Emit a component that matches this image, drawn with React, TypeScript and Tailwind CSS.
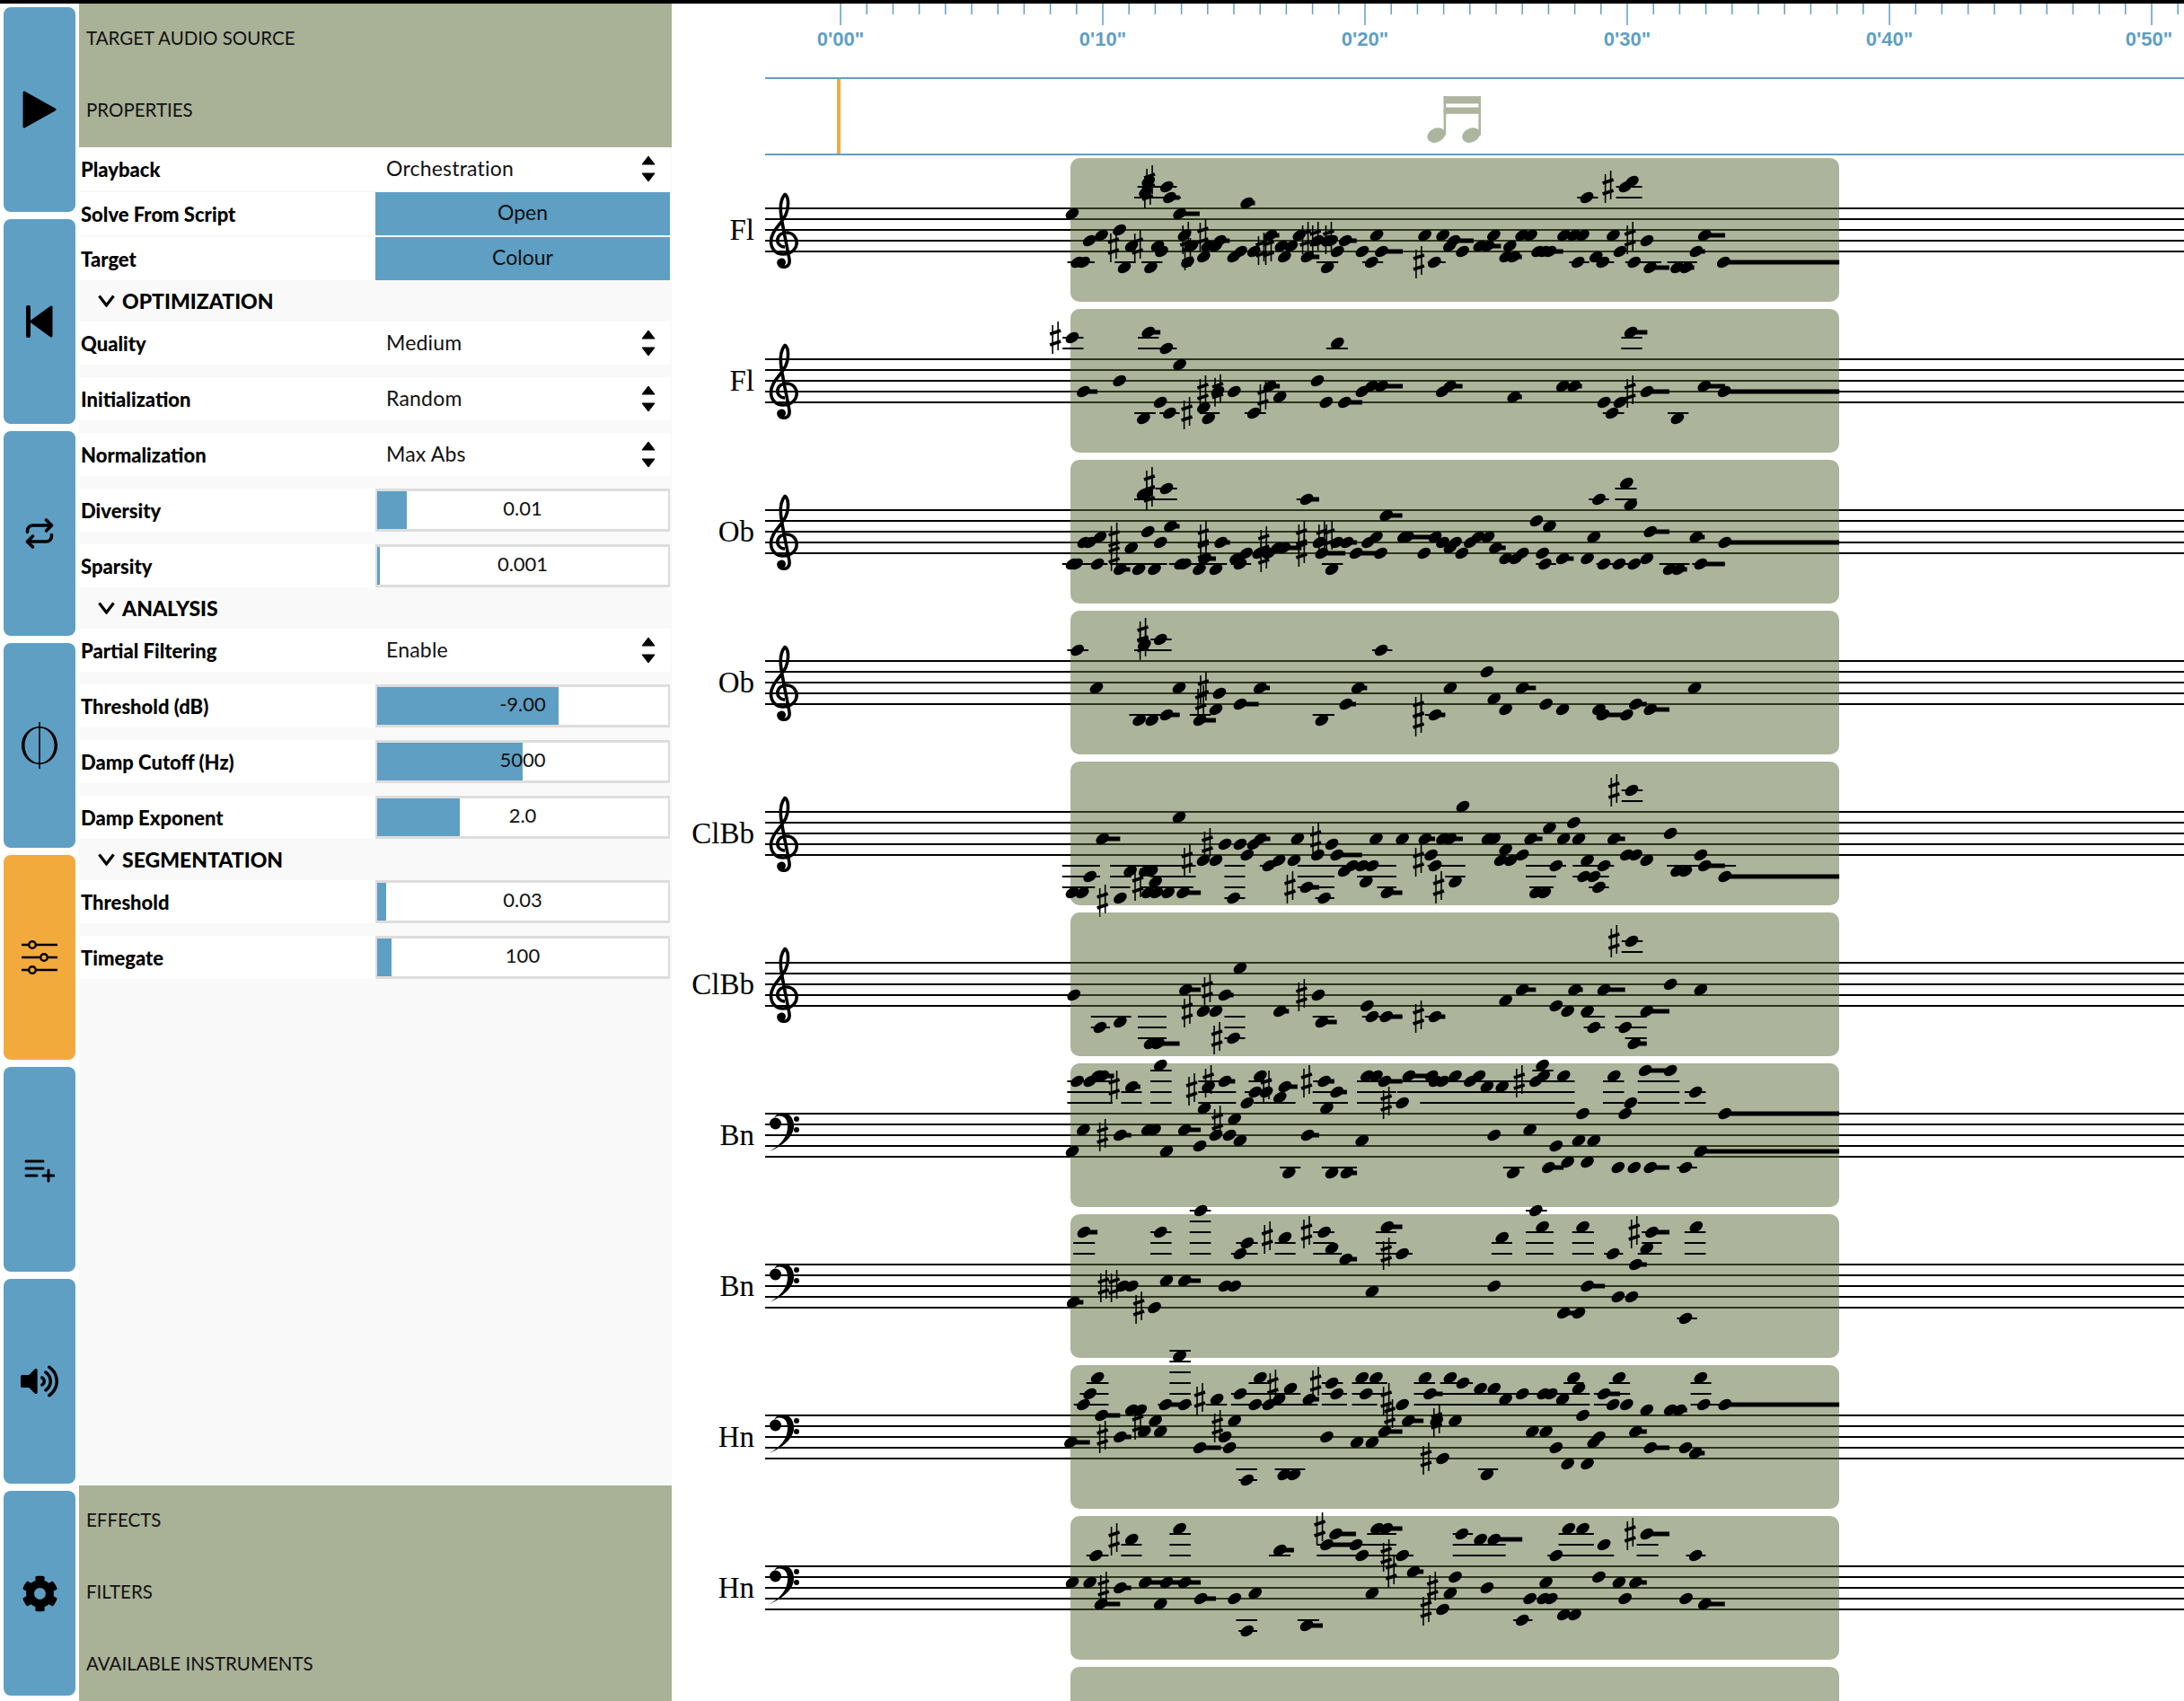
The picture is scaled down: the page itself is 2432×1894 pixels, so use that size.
import { Repeat } from "lucide-react";
import { FaCog, FaVolumeUp } from "react-icons/fa";

type Note = [number, number, number?];
type Sharp = [number, number];
type Ledger = [number, number, number];
type Part = { o: number; k: number; n: Note[]; s: Sharp[]; l: Ledger[] };
type StaffData = { name: string; clef: "treble" | "bass"; parts: Part[] };

const font = "[font-family:Lato,'Liberation_Sans',sans-serif]";
const LEFT = 748;
const TOP = 60;

const oboe1: Part = {
  o: 1180,
  k: 1.782,
  n: [
    [25, 10], [33, 10], [75, 10], [48, 6], [60, 6], [80, 5], [120, 11, 140], [142, 7], [157, 11], [188, 11], [175, 4], [200, 6], [220, 3, 238],
    [172, -3], [166, -3], [212, -4], [240, 10, 260], [248, 10], [288, 9, 310], [277, 11], [310, 11], [320, 6, 338], [350, 9], [358, 10], [370, 8],
    [395, 8], [415, 8], [432, 7], [445, 7, 480], [490, -2, 515], [515, 6], [520, 8, 567], [550, 6], [570, 6, 590], [540, 11], [588, 8, 640], [637, 8],
    [612, 6], [628, 5], [648, 1, 680], [683, 5, 745], [690, 5], [745, 5], [723, 8], [760, 6], [785, 6], [775, 7], [798, 8], [815, 6], [830, 5], [850, 5],
    [865, 7, 885], [885, 9], [905, 9], [918, 8], [946, 2], [972, 3], [958, 8], [963, 10], [998, 9, 1020], [1047, 9], [1060, 5], [1070, -2], [1125, -5],
    [1133, -1], [1172, 4, 1210], [1263, 5, 1280], [1080, 10], [1110, 10], [1140, 10], [1165, 9], [1210, 11], [1228, 11, 1245], [1272, 10, 1320], [1320, 6, 1547],
  ],
  s: [[108, 5.3], [108, 8.3], [178, -5], [178, -3], [285, 5], [285, 7.5], [405, 6], [405, 8.5], [480, 5], [480, 7.5], [520, 5], [535, 5]],
  l: [[5, 95, 10], [100, 213, 10], [148, 233, -2], [190, 233, -4], [217, 332, 10], [340, 380, 10], [470, 515, -2], [520, 562, 10], [945, 985, 10], [1050, 1090, -2], [1102, 1145, -4], [1102, 1145, -2], [1065, 1150, 10], [1190, 1250, 10], [1255, 1320, 10]],
};

const oboe2: Part = {
  o: 1180,
  k: 1.782,
  n: [
    [35, -2], [168, -3], [200, -4], [73, 5], [237, 5], [158, 11], [183, 11], [212, 10, 238], [317, 6], [310, 9], [278, 11, 310], [358, 8, 395], [398, 5, 417],
    [520, 11], [568, 8, 588], [592, 5, 610], [638, -2], [745, 10, 765], [775, 5], [848, 2], [862, 7], [885, 9], [918, 5, 945], [965, 8], [998, 9], [1070, 9],
    [1078, 10, 1120], [1125, 10], [1143, 8, 1165], [1172, 9, 1210], [1260, 5],
  ],
  s: [[165, -5], [165, -3.2], [285, 5], [280, 7.5], [712, 9], [712, 11]],
  l: [[15, 57, -2], [180, 222, -4], [148, 222, -2], [138, 238, 10], [258, 300, 10], [502, 545, 10], [620, 660, -2], [725, 765, 10]],
};

const clar1: Part = {
  o: 1180,
  k: 1.782,
  n: [
    [25, 15], [45, 15], [60, 12], [120, 16], [85, 5, 120], [140, 11], [170, 11], [182, 11], [190, 13], [175, 15], [192, 15], [215, 15], [245, 15, 280], [237, 1],
    [285, 9], [310, 9], [328, 6], [358, 6], [385, 6], [398, 5, 418], [372, 8], [345, 16], [415, 10], [435, 9], [465, 9], [472, 5], [540, 6], [512, 8], [550, 8, 600],
    [490, 14, 515], [525, 16], [565, 11], [580, 10], [600, 10], [620, 10], [608, 13], [650, 15, 680], [628, 5], [680, 5], [725, 5, 745], [760, 5], [775, 5, 800], [800, -1],
    [737, 8], [745, 10], [785, 13], [850, 5], [862, 5], [885, 7], [875, 9], [895, 9], [918, 8], [935, 5, 958], [972, 3], [1020, 2], [1000, 5], [1030, 5], [985, 10],
    [945, 15], [962, 15], [1047, 9], [1080, 10], [1040, 12], [1060, 12], [1070, 14], [1100, 5, 1122], [1135, -4], [1125, 8], [1143, 8], [1165, 9], [1212, 4], [1272, 8],
    [1225, 11], [1242, 11], [1280, 10, 1320], [1320, 12, 1547],
  ],
  s: [[85, 16.5], [155, 13.5], [253, 9], [293, 6], [508, 5], [457, 14], [712, 9], [752, 14], [1100, -4]],
  l: [
    [5, 80, 10], [5, 80, 12], [5, 70, 14], [100, 270, 10], [100, 142, 12], [100, 140, 14], [180, 270, 12], [160, 265, 14], [327, 368, 10], [327, 368, 12], [327, 368, 14], [327, 368, 16],
    [397, 430, 10], [472, 668, 10], [472, 545, 12], [472, 545, 14], [507, 545, 16], [590, 668, 12], [630, 668, 14], [730, 805, 10], [765, 805, 12], [925, 1005, 10], [925, 985, 12], [932, 980, 14],
    [1018, 1100, 10], [1018, 1090, 12], [1050, 1090, 14], [1115, 1157, -4], [1115, 1157, -2], [1205, 1342, 10],
  ],
};

const clar2: Part = {
  o: 1180,
  k: 1.782,
  n: [
    [28, 6], [80, 12], [120, 11], [180, 15], [195, 15, 238], [250, 5, 280], [328, 6, 345], [285, 9], [310, 9], [358, 1], [345, 14], [437, 9, 455], [513, 6], [520, 11, 550],
    [610, 8], [620, 10], [648, 10, 680], [745, 10, 765], [885, 7], [918, 5, 945], [985, 8], [1008, 9], [1047, 9], [1060, 12], [1022, 5, 1038], [1080, 5, 1122], [1122, 12],
    [1140, 15, 1165], [1165, 9, 1210], [1135, -4], [1212, 4], [1272, 5],
  ],
  s: [[293, 5], [253, 9], [312, 14], [480, 6], [712, 10], [1100, -4]],
  l: [[62, 142, 10], [62, 100, 12], [155, 212, 10], [155, 212, 12], [155, 212, 14], [327, 368, 10], [327, 368, 12], [327, 368, 14], [502, 545, 10], [600, 680, 10], [725, 765, 10], [1038, 1082, 10], [1040, 1082, 12], [1102, 1165, 10], [1102, 1165, 12], [1122, 1165, 14], [1115, 1157, -4], [1115, 1157, -2]],
};

const bassoon1: Part = {
  o: 1180,
  k: 1.782,
  n: [
    [25, 7], [47, 3], [120, 4, 142], [175, 3], [188, 3], [212, 7], [248, 3, 280], [278, 6], [35, -6], [60, -6], [75, -7], [85, -7, 108], [143, -5, 160], [200, -9], [295, -5], [328, -6, 348],
    [287, -1], [347, 1], [310, 4], [337, 4], [358, 5], [372, -2], [398, -7], [388, -4], [410, -4], [437, -3], [447, -5, 472], [525, -6, 545], [550, -4, 570], [530, -1], [492, 4, 515],
    [455, 11], [540, 11], [570, 11, 590], [600, 5], [610, -7], [628, -7], [645, -6, 680], [680, -2], [693, -7, 738], [738, -7], [745, -6], [760, -6], [785, -7], [815, -6], [832, -7],
    [848, -5], [878, -5], [945, -6], [958, -9], [960, -7], [1000, -7], [862, 4], [933, 3], [985, 6], [1030, 5], [1060, 5], [1008, 9], [1047, 9], [970, 10, 1000], [900, 11], [1038, 0],
    [1122, 0], [1133, -2], [1100, -7], [1162, -8, 1212], [1212, -8], [1262, -4], [1108, 10], [1140, 10], [1172, 10, 1210], [1242, 10], [1320, 0, 1547], [1272, 7, 1547],
  ],
  s: [[85, 4], [108, -5], [262, -4.5], [295, -6], [313, 1.5], [410, -5], [490, -6], [648, -2], [912, -6]],
  l: [
    [15, 100, -6], [15, 100, -4], [15, 105, -2], [122, 163, -4], [122, 163, -2], [180, 222, -8], [180, 222, -6], [180, 222, -4], [180, 222, -2], [275, 348, -6], [275, 350, -4], [275, 350, -2],
    [375, 420, -6], [367, 420, -4], [385, 468, -2], [503, 545, -6], [502, 570, -4], [502, 572, -2], [437, 478, 10], [520, 590, 10], [590, 680, -6], [590, 668, -4], [590, 668, -2], [680, 1022, -6],
    [670, 1022, -4], [715, 1022, -2], [938, 980, -8], [880, 922, 10], [1078, 1120, -6], [1078, 1120, -4], [1078, 1120, -2], [1147, 1230, -6], [1147, 1230, -4], [1147, 1230, -2], [1240, 1282, -4], [1240, 1282, -2], [1225, 1265, 10],
  ],
};

const bassoon2: Part = {
  o: 1180,
  k: 1.782,
  n: [
    [48, -6, 75], [200, -6], [280, -10], [372, -4], [358, -2], [447, -5], [525, -6], [540, -3], [568, -1, 590], [650, -7, 680], [680, -2], [27, 7, 47], [143, 4], [125, 4], [188, 8],
    [212, 3], [248, 3, 280], [328, 4], [347, 4], [238, 17], [620, 5], [862, 4], [878, -5], [945, -10], [958, -7], [1038, -7], [1098, -2], [1175, -6, 1210], [1165, -3], [1143, 0, 1165],
    [1263, -7], [1047, 4, 1082], [1000, 9, 1030], [1030, 9], [1108, 6], [1135, 6], [1242, 10],
  ],
  s: [[87, 4], [108, 4], [157, 8], [412, -5], [490, -6], [648, -2], [1140, -6]],
  l: [
    [27, 70, -4], [27, 70, -2], [180, 222, -6], [180, 222, -4], [180, 222, -2], [258, 300, -10], [258, 300, -8], [258, 300, -6], [258, 300, -4], [258, 300, -2], [350, 393, -4], [340, 393, -2],
    [427, 468, -4], [427, 468, -2], [503, 545, -6], [503, 545, -4], [503, 560, -2], [627, 668, -6], [627, 668, -4], [627, 700, -2], [218, 260, 16], [857, 898, -4], [857, 898, -2], [925, 967, -10],
    [925, 980, -6], [925, 980, -4], [925, 980, -2], [1017, 1060, -6], [1017, 1060, -4], [1017, 1060, -2], [1080, 1118, -2], [1155, 1195, -6], [1155, 1195, -4], [1147, 1195, -2], [1240, 1282, -6], [1240, 1282, -4], [1240, 1282, -2], [1225, 1265, 10],
  ],
};

const horn1: Part = {
  o: 1180,
  k: 1.782,
  n: [
    [75, -7], [60, -4], [47, -2], [83, 0, 120], [22, 5, 60], [120, 4, 142], [143, -1], [160, -1], [190, 1], [168, 3], [200, 3], [238, -11], [210, -2, 248], [248, -2], [312, -3], [347, 1], [328, 4],
    [278, 6, 320], [337, 6], [358, -4], [388, -2], [398, -7], [415, -2], [435, -3], [458, -5], [495, -3, 515], [540, -6], [550, -4], [372, 12], [445, 11], [465, 11], [530, 4], [590, 5], [620, 5],
    [600, -7], [628, -7], [608, -4], [645, 3, 680], [680, -2], [692, 1, 722], [725, -7], [735, -4, 760], [775, -7], [800, -6], [835, -5], [862, -5], [748, 1], [785, 1], [760, 8], [848, 11],
    [885, -3], [918, -4], [960, -4], [975, -4], [938, 3], [965, 3], [985, 6], [1008, 9], [1047, 9], [1060, 5], [1070, 4], [998, -3], [1030, -5], [1020, -7], [1038, 0], [1080, -4, 1112], [1110, -7],
    [1098, -2], [1125, -2], [1165, -1], [1212, -1], [1230, -1, 1245], [1143, 3, 1165], [1172, 6, 1210], [1242, 6], [1262, 7, 1280], [1272, -7], [1278, -2], [1320, -2, 1547],
  ],
  s: [[85, 4], [155, 1.5], [278, -3], [313, 2], [423, -5.5], [508, -6], [648, -3], [655, 0], [748, 1], [727, 8]],
  l: [
    [53, 97, -6], [40, 97, -4], [28, 97, -2], [218, 260, -10], [218, 260, -8], [218, 260, -6], [218, 260, -4], [195, 262, -2], [290, 332, -2], [340, 478, -4], [340, 512, -2], [375, 420, -6], [520, 562, -6],
    [520, 570, -4], [520, 570, -2], [350, 392, 10], [355, 392, 12], [427, 487, 10], [580, 650, -6], [580, 650, -4], [580, 630, -2], [703, 745, -6], [703, 880, -4], [703, 1052, -2], [755, 820, -6],
    [830, 870, 10], [880, 1052, -4], [1000, 1040, -6], [1090, 1132, -6], [1060, 1132, -4], [1060, 1090, -2], [1252, 1293, -6], [1252, 1293, -4], [1252, 1320, -2],
  ],
};

const horn2: Part = {
  o: 1180,
  k: 1.782,
  n: [
    [25, 3], [60, 3], [120, 4, 142], [82, 7, 120], [72, -2], [143, -5], [238, -7], [170, 3, 248], [212, 3], [248, 3, 280], [200, 7], [280, 6, 310], [347, 6], [388, 5], [372, 12], [437, -3, 465],
    [490, 11, 522], [548, -6, 588], [530, -4, 588], [588, -4], [600, -2], [630, -7], [648, -7, 680], [680, -2], [702, 1, 722], [620, 5], [760, 8], [775, 5], [785, 2], [848, 4], [918, 10], [798, -6],
    [835, -5], [862, -5, 918], [965, 3], [933, 6], [960, 6], [975, 6], [1000, 9], [1022, 9], [1010, -7], [1038, -7], [985, -2], [1080, -4], [1070, 2], [1110, 3], [1143, 3, 1165], [1122, 6],
    [1165, -6, 1210], [1262, -2], [1243, 6], [1280, 7, 1320],
  ],
  s: [[87, 4], [108, -5], [516, -7], [648, -2], [658, 1], [740, 4], [727, 8], [1132, -6]],
  l: [
    [53, 97, -2], [122, 163, -4], [122, 163, -2], [218, 260, -6], [218, 260, -4], [218, 260, -2], [350, 392, 10], [355, 392, 12], [415, 458, -2], [472, 515, 10], [510, 668, -4], [510, 702, -2], [610, 668, -6],
    [780, 820, -6], [780, 885, -4], [780, 885, -2], [900, 938, 10], [990, 1060, -6], [990, 1060, -4], [968, 1100, -2], [1145, 1188, -4], [1145, 1188, -2], [1243, 1282, -2],
  ],
};

const staves: StaffData[] = [
  {
    name: "Fl",
    clef: "treble",
    parts: [
      {
        o: 760,
        k: 2.24,
        n: [
          [972, 1], [985, 10], [1000, 10], [1015, 6], [1045, 5], [1090, 4], [1102, 11], [1120, 7], [1185, 7], [1195, 8], [1168, 11], [1162, -5], [1155, -3], [1208, -4], [1215, -2, 1240], [1240, 1, 1290],
          [1252, 5], [1260, 10], [1270, 7], [1300, 9], [1310, 7], [1340, 6, 1365], [1330, 7], [1408, -1, 1428], [1375, 9], [1392, 8], [1425, 8],
        ],
        s: [[1075, 7], [1135, 7], [1165, -5], [1160, -3], [1255, 5.5], [1298, 5], [1260, 8.5]],
        l: [[960, 1028, 10], [1078, 1130, 10], [1145, 1197, 10], [1135, 1233, -4], [1127, 1243, -2]],
      },
      {
        o: 1400,
        k: 2.24,
        n: [
          [33, 5, 55], [68, 9], [60, 7], [85, 7], [105, 5], [125, 9, 155], [150, 6], [175, 6], [185, 6], [220, 6, 248], [200, 8], [175, 11], [298, 5], [262, 8], [310, 8, 363], [285, 10], [442, 10], [418, 5],
          [463, 5], [490, 6, 540], [480, 7], [512, 8], [555, 7], [575, 7, 608], [590, 5], [630, 7], [620, 9], [640, 9, 660], [660, 5], [682, 5], [700, 8], [715, 8], [730, 8, 763], [765, 5], [790, 5], [812, 5],
          [800, 10], [845, 9], [862, 10], [888, 5], [905, 8], [972, 6], [940, 10], [980, 11, 1028], [1047, 11], [1070, 11, 1090], [1116, 5, 1167], [1095, 8, 1117], [822, -2], [918, -4], [935, -5], [1163, 10, 1452],
        ],
        s: [[10, 7.5], [28, 7.5], [120, 5.5], [145, 5.5], [178, 5.5], [403, 10], [930, 5.5], [875, -4]],
        l: [[148, 202, 10], [262, 314, 10], [425, 470, 10], [778, 828, 10], [850, 890, 10], [918, 1008, 10], [1023, 1097, 10], [798, 850, -2], [895, 960, -4], [895, 960, -2]],
      },
    ],
  },
  {
    name: "Fl",
    clef: "treble",
    parts: [
      {
        o: 760,
        k: 2.24,
        n: [[972, -4], [1000, 6, 1035], [1090, 4], [1162, -5, 1192], [1207, -2], [1240, 1], [1150, 11], [1192, 8], [1215, 10], [1300, 9], [1312, 11], [1376, 6], [1335, 6], [1425, 10], [1465, 5, 1490], [1490, 7]],
        s: [[930, -4], [1258, 10], [1298, 6], [1335, 5.8], [1448, 7]],
        l: [[948, 1000, -4], [948, 1000, -2], [1136, 1188, -4], [1136, 1233, -2], [1127, 1180, 10], [1190, 1240, 10], [1290, 1340, 10], [1402, 1455, 10]],
      },
      {
        o: 1400,
        k: 2.24,
        n: [[200, -3], [150, 4], [172, 8], [218, 8, 262], [262, 6], [285, 5], [310, 5, 363], [462, 6], [480, 5, 512], [640, 7, 660], [762, 5], [790, 5, 810], [865, 8], [905, 8], [885, 10], [972, 6, 1028], [1048, 11], [932, -5, 973], [1115, 5, 1167], [1165, 6, 1452]],
        s: [[930, 6]],
        l: [[172, 226, -2], [862, 915, 10], [1024, 1076, 10], [908, 960, -4], [908, 960, -2]],
      },
    ],
  },
  { name: "Ob", clef: "treble", parts: [oboe1] },
  { name: "Ob", clef: "treble", parts: [oboe2] },
  { name: "ClBb", clef: "treble", parts: [clar1] },
  { name: "ClBb", clef: "treble", parts: [clar2] },
  { name: "Bn", clef: "bass", parts: [bassoon1] },
  { name: "Bn", clef: "bass", parts: [bassoon2] },
  { name: "Hn", clef: "bass", parts: [horn1] },
  { name: "Hn", clef: "bass", parts: [horn2] },
];

function TrebleClef() {
  return (
    <g transform={`translate(${857 - LEFT} 43)`}>
      <path
        d="M17 60C11 60 8 55 9 51C10 46 15 44 19 44C26 44 31 50 30 57C29 64 22 68 15 68C7 68 1.5 62 1.5 54C1.5 42 13 35 18 24C20.500 18 21 11 20 6C19 3 18 1.500 17 1.500C14 5 11.500 12 12.500 22C14 36 20 62 22 74C23 81 18 83 14 82C10 81 9 77 11 75"
        fill="none"
        stroke="black"
        strokeWidth="3.600"
      />
      <circle cx="13.500" cy="77" r="4.500" fill="black" />
    </g>
  );
}

function BassClef() {
  return (
    <g transform={`translate(${857 - LEFT} 60)`}>
      <path d="M0 42C12 35 20 26 20 14C20 6 16 2.500 11 2.500C8 2.500 5.500 4 5 6C6 1 11 -1 15 -1C23 -1 27 6 27 14C27 26 14 36 0 42Z" fill="black" />
      <circle cx="6.500" cy="11" r="6.500" fill="black" />
      <circle cx="30" cy="6" r="3" fill="black" />
      <circle cx="30" cy="18" r="3" fill="black" />
    </g>
  );
}

function SharpSign({ x, y }: { x: number; y: number }) {
  return (
    <g stroke="black">
      <line x1={x - 3} y1={y - 14} x2={x - 3} y2={y + 18} strokeWidth="1.6" />
      <line x1={x + 3} y1={y - 18} x2={x + 3} y2={y + 14} strokeWidth="1.6" />
      <line x1={x - 6} y1={y - 4} x2={x + 6} y2={y - 8} strokeWidth="3.5" />
      <line x1={x - 6} y1={y + 8} x2={x + 6} y2={y + 4} strokeWidth="3.5" />
    </g>
  );
}

function Notes({ part }: { part: Part }) {
  const px = (z: number) => part.o + z / part.k - LEFT;
  const py = (step: number) => TOP + step * 6;
  return (
    <>
      {part.l.map(([a, b, step], i) => (
        <line key={`l${i}`} x1={px(a)} x2={px(b)} y1={py(step)} y2={py(step)} stroke="black" strokeWidth="2" />
      ))}
      {part.n.map(([z, step, end], i) =>
        end ? <rect key={`t${i}`} x={px(z)} y={py(step) - 2.5} width={px(end) - px(z)} height="5" fill="black" /> : null,
      )}
      {part.n.map(([z, step], i) => (
        <ellipse key={`n${i}`} cx={px(z)} cy={py(step)} rx="8" ry="5.400" fill="black" transform={`rotate(-32 ${px(z)} ${py(step)})`} />
      ))}
      {part.s.map(([z, step], i) => (
        <SharpSign key={`s${i}`} x={px(z)} y={py(step)} />
      ))}
    </>
  );
}

function Staff({ data }: { data: StaffData }) {
  return (
    <div className="relative flex h-[168px] items-center">
      <div className="w-[92px] pt-px text-right text-[33px] leading-none text-black [font-family:'Liberation_Serif',serif]">{data.name}</div>
      <svg className="absolute left-0 top-0 h-[168px] w-[1684px] overflow-visible">
        {[0, 1, 2, 3, 4].map((i) => (
          <line key={i} x1={104} x2={1684} y1={TOP + i * 12} y2={TOP + i * 12} stroke="black" strokeWidth="2" />
        ))}
        {data.clef === "treble" ? <TrebleClef /> : <BassClef />}
      </svg>
      <div className="absolute left-[444px] top-1 h-[160px] w-[856px] rounded-[10px] bg-[#596937]/50" />
      <svg className="absolute left-0 top-0 h-[168px] w-[1684px] overflow-visible">
        {data.parts.map((part, i) => (
          <Notes key={i} part={part} />
        ))}
      </svg>
    </div>
  );
}

function Ruler() {
  const ticks = Array.from({ length: 52 }, (_, i) => i);
  const labels = ["0'00\"", "0'10\"", "0'20\"", "0'30\"", "0'40\"", "0'50\""];
  return (
    <div className="relative h-[82px]">
      <svg className="h-[28px] w-[1684px]">
        {ticks.map((i) => (
          <line key={i} x1={188 + i * 29.2} x2={188 + i * 29.2} y1={0} y2={i % 10 === 0 ? 24 : 12} stroke="#5f9fc4" strokeWidth="1.5" />
        ))}
      </svg>
      {labels.map((text, i) => (
        <span
          key={text}
          style={{ left: i === 5 ? 1645 : 188 + i * 292 }}
          className="absolute top-7 -translate-x-1/2 text-[22px] font-bold leading-6 text-[#5f9fc4] [font-family:'Liberation_Sans',sans-serif]"
        >
          {text}
        </span>
      ))}
    </div>
  );
}

function MarkerTrack() {
  return (
    <div className="relative ml-[104px] flex h-[87px] items-center justify-center border-y-2 border-[#5f9fc4] pr-[46px] pt-[6px]">
      <div className="absolute bottom-0 left-20 top-0 w-1 bg-[#f3aa3c]" />
      <svg className="h-[52px] w-[60px]" viewBox="0 0 58 50">
        <rect x="18" y="0" width="40" height="8" fill="#aeb59f" />
        <rect x="18" y="12" width="40" height="7" fill="#aeb59f" />
        <rect x="18" y="0" width="2.500" height="42" fill="#aeb59f" />
        <rect x="55.500" y="0" width="2.500" height="42" fill="#aeb59f" />
        <ellipse cx="10" cy="42" rx="10" ry="7.500" transform="rotate(-25 10 42)" fill="#aeb59f" />
        <ellipse cx="47.500" cy="42" rx="10" ry="7.500" transform="rotate(-25 47.500 42)" fill="#aeb59f" />
      </svg>
    </div>
  );
}

function NavButton({ active, children }: { active?: boolean; children: React.ReactNode }) {
  return (
    <button className={`flex h-[228px] w-20 shrink-0 items-center justify-center rounded-lg ${active ? "bg-[#f3aa3c]" : "bg-[#5f9fc4]"}`}>
      {children}
    </button>
  );
}

function Sidebar() {
  return (
    <div className="flex w-[88px] shrink-0 flex-col gap-2 pl-1 pt-1">
      <NavButton>
        <svg width="38" height="42" viewBox="0 0 38 42">
          <path d="M2 2L36 21L2 40Z" fill="black" stroke="black" strokeWidth="3" strokeLinejoin="round" />
        </svg>
      </NavButton>
      <NavButton>
        <svg width="30" height="36" viewBox="0 0 30 36">
          <rect x="0" y="0" width="5" height="36" rx="2" fill="black" />
          <path d="M28 2V34L6 18Z" fill="black" stroke="black" strokeWidth="3" strokeLinejoin="round" />
        </svg>
      </NavButton>
      <NavButton>
        <Repeat size={36} strokeWidth={2.4} color="black" />
      </NavButton>
      <NavButton>
        <svg width="40" height="52" viewBox="0 0 40 52">
          <path fillRule="evenodd" d="M20 5C31 5 40 14 40 26C40 38 31 47 20 47C9 47 0 38 0 26C0 14 9 5 20 5ZM20 6.500C12 6.500 3.500 14 3.500 26C3.500 38 12 45.500 20 45.500C28 45.500 36.500 38 36.500 26C36.500 14 28 6.500 20 6.500Z" fill="black" />
          <rect x="19.200" y="0" width="1.600" height="52" fill="black" />
        </svg>
      </NavButton>
      <NavButton active>
        <svg width="40" height="38" viewBox="0 0 40 38" stroke="black" strokeWidth="2.500" fill="none">
          <line x1="0" y1="5" x2="40" y2="5" />
          <line x1="0" y1="19" x2="40" y2="19" />
          <line x1="0" y1="33" x2="40" y2="33" />
          <circle cx="12" cy="5" r="3.800" fill="#f3aa3c" />
          <circle cx="25" cy="19" r="3.800" fill="#f3aa3c" />
          <circle cx="12" cy="33" r="3.800" fill="#f3aa3c" />
        </svg>
      </NavButton>
      <NavButton>
        <svg width="34" height="26" viewBox="0 0 34 26" stroke="black" strokeWidth="3" strokeLinecap="round" className="mt-[3px]">
          <line x1="2" y1="2" x2="21" y2="2" />
          <line x1="2" y1="10" x2="21" y2="10" />
          <line x1="2" y1="18" x2="14" y2="18" />
          <line x1="21" y1="18" x2="33" y2="18" />
          <line x1="27" y1="12" x2="27" y2="24" />
        </svg>
      </NavButton>
      <NavButton>
        <FaVolumeUp size={42} color="black" />
      </NavButton>
      <NavButton>
        <FaCog size={41} color="black" />
      </NavButton>
    </div>
  );
}

function PanelHeading({ children }: { children: string }) {
  return <div className="flex h-20 items-center px-2 pb-[3px] text-[20.5px] text-[#111]">{children}</div>;
}

function Label({ children }: { children: string }) {
  return <div className="w-[329px] shrink-0 pl-px text-[22px] font-black text-black">{children}</div>;
}

function SelectRow({ label, value }: { label: string; value: string }) {
  return (
    <div className="flex h-12 items-center bg-white">
      <Label>{label}</Label>
      <div className="flex flex-1 items-center justify-between pl-3 pr-4 text-[23px] tracking-[0.2px] text-[#111]">
        <span className="pb-0.5">{value}</span>
        <svg width="16" height="30" viewBox="0 0 16 30">
          <path d="M8 1L15 10H1Z" fill="black" stroke="black" strokeLinejoin="round" />
          <path d="M1 20H15L8 29Z" fill="black" stroke="black" strokeLinejoin="round" />
        </svg>
      </div>
    </div>
  );
}

function ButtonRow({ label, value }: { label: string; value: string }) {
  return (
    <div className="flex h-12 items-center bg-white">
      <Label>{label}</Label>
      <button className="h-12 flex-1 bg-[#5f9fc4] pb-1 text-[23px] text-[#111]">{value}</button>
    </div>
  );
}

function SliderRow({ label, value, fill }: { label: string; value: string; fill: number }) {
  return (
    <div className="flex h-12 items-center bg-white">
      <Label>{label}</Label>
      <div className="relative h-12 flex-1 border-[3px] border-x-2 border-[#dddddd] bg-white">
        <div style={{ width: fill }} className="h-full bg-[#5f9fc4]" />
        <div className="absolute inset-0 flex items-center justify-center pb-1.5 text-[22px] text-[#111]">{value}</div>
      </div>
    </div>
  );
}

function Section({ children }: { children: string }) {
  return (
    <div className="flex h-[46px] items-center gap-2 pl-5 text-[23px] font-black text-black">
      <svg width="19" height="14" viewBox="0 0 19 14" fill="none" stroke="black" strokeWidth="3.200">
        <path d="M1.500 1.500L9.500 12L17.500 1.500" />
      </svg>
      <span>{children}</span>
    </div>
  );
}

function Panel() {
  return (
    <div className={`flex w-[660px] shrink-0 flex-col bg-[#f9f9f9] ${font}`}>
      <div className="bg-[#a9b197]">
        <PanelHeading>TARGET AUDIO SOURCE</PanelHeading>
        <PanelHeading>PROPERTIES</PanelHeading>
      </div>
      <div className="flex-1 pl-px pr-[2px]">
        <div className="flex flex-col gap-[2px]">
          <SelectRow label="Playback" value="Orchestration" />
          <ButtonRow label="Solve From Script" value="Open" />
          <ButtonRow label="Target" value="Colour" />
        </div>
        <Section>OPTIMIZATION</Section>
        <div className="flex flex-col gap-[14px]">
          <SelectRow label="Quality" value="Medium" />
          <SelectRow label="Initialization" value="Random" />
          <SelectRow label="Normalization" value="Max Abs" />
          <SliderRow label="Diversity" value="0.01" fill={33} />
          <SliderRow label="Sparsity" value="0.001" fill={3} />
        </div>
        <Section>ANALYSIS</Section>
        <div className="flex flex-col gap-[14px]">
          <SelectRow label="Partial Filtering" value="Enable" />
          <SliderRow label="Threshold (dB)" value="-9.00" fill={202} />
          <SliderRow label="Damp Cutoff (Hz)" value="5000" fill={162} />
          <SliderRow label="Damp Exponent" value="2.0" fill={92} />
        </div>
        <Section>SEGMENTATION</Section>
        <div className="flex flex-col gap-[14px]">
          <SliderRow label="Threshold" value="0.03" fill={10} />
          <SliderRow label="Timegate" value="100" fill={16} />
        </div>
      </div>
      <div className="bg-[#a9b197]">
        <PanelHeading>EFFECTS</PanelHeading>
        <PanelHeading>FILTERS</PanelHeading>
        <PanelHeading>AVAILABLE INSTRUMENTS</PanelHeading>
      </div>
    </div>
  );
}

function Score() {
  return (
    <div className="min-w-0 flex-1 overflow-hidden">
      <Ruler />
      <MarkerTrack />
      <div className="-mt-px">
        {staves.map((staff, i) => (
          <Staff key={i} data={staff} />
        ))}
        <div className="ml-[444px] mt-1 h-[160px] w-[856px] rounded-[10px] bg-[#596937]/50" />
      </div>
    </div>
  );
}

export default function App() {
  return (
    <div className="flex h-[1894px] w-[2432px] flex-col overflow-hidden bg-white">
      <div className="h-1 shrink-0 bg-black" />
      <div className="flex min-h-0 flex-1">
        <Sidebar />
        <Panel />
        <Score />
      </div>
    </div>
  );
}
